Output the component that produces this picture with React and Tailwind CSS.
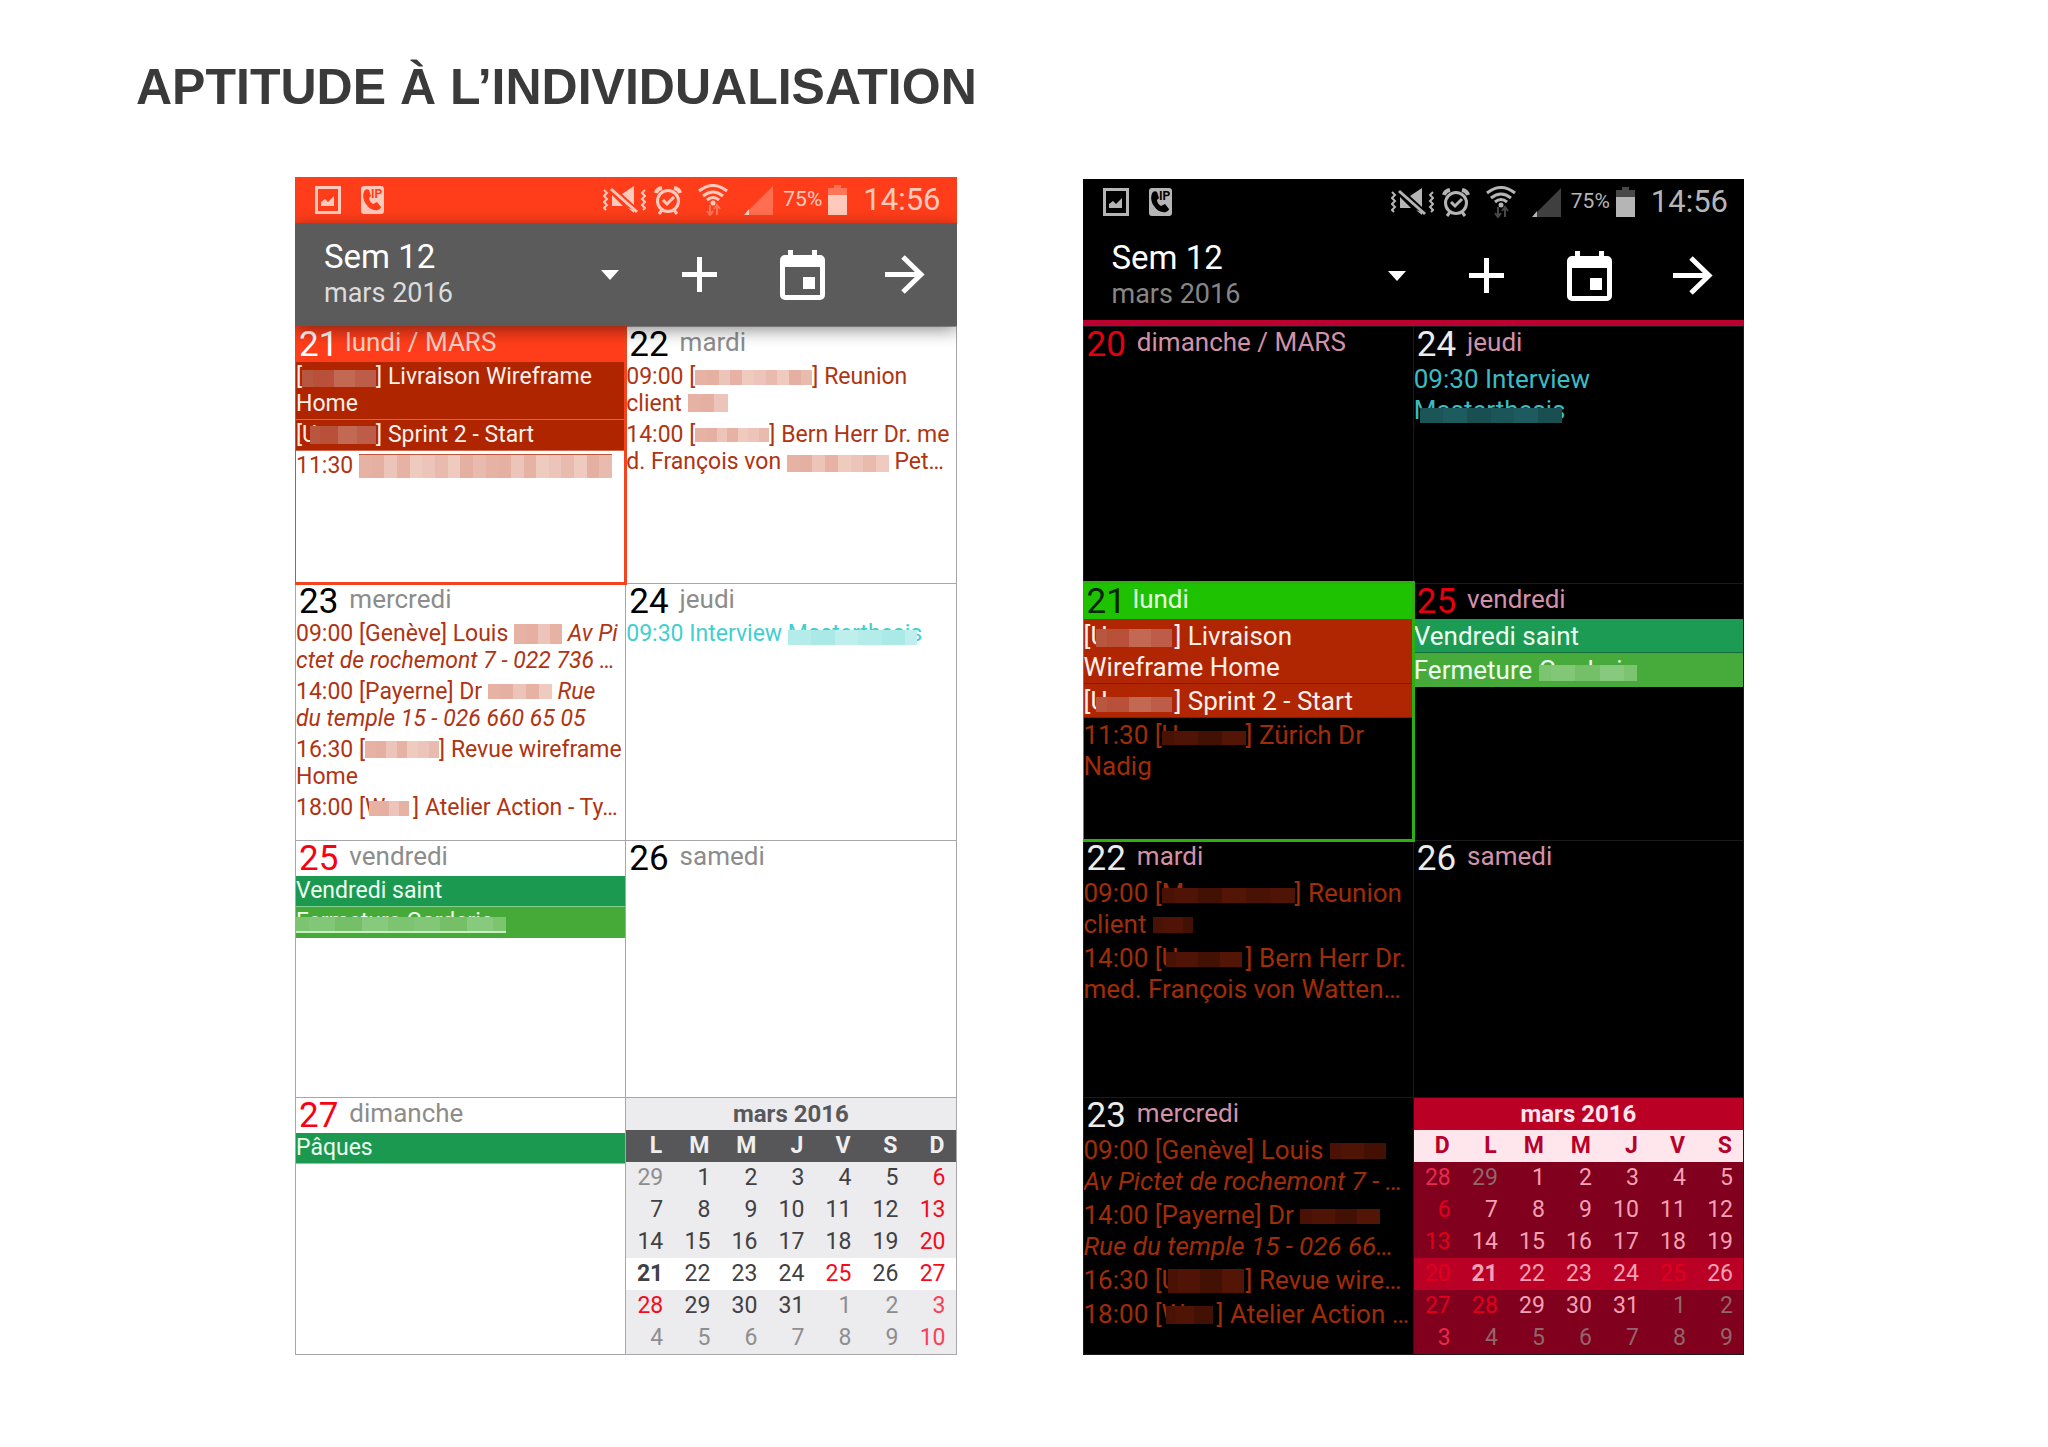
import React from 'react';
import clsx from 'clsx';

/* ---------- Icons ---------- */

const PictureIcon = () => (
  <svg width="26" height="28" viewBox="0 0 26 28" aria-hidden="true">
    <path fill="currentColor" fillRule="evenodd" d="M0 0h26v28H0zM3 3v22h20V3z" />
    <path fill="currentColor" d="M6 20v-4l4-3 3 3 6-6v10z" />
  </svg>
);

const IpPhoneIcon = ({ cutout }) => (
  <svg width="23" height="28" viewBox="0 0 23 28" aria-hidden="true">
    <rect width="23" height="28" rx="3" fill="currentColor" />
    <path
      className={cutout}
      d="M4 4c-3 4-2 10 1 14 3 5 8 7 12 6 2-1 3-2 3-3l-4-5-4 2c-2-1-4-4-4-6l2-2-2-6c-1-1-3-1-4 0z"
    />
    <text x="10" y="12" className={clsx(cutout, "font-['Roboto'] text-[12px] font-bold")}>IP</text>
  </svg>
);

const MuteIcon = () => (
  <svg width="43" height="28" viewBox="0 0 43 28" fill="none" stroke="currentColor" aria-hidden="true">
    <path strokeWidth="2" d="M1 4l3 3-3 3 3 3-3 3 3 3-3 3 2 2M42 4l-3 3 3 3-3 3 3 3-3 3 3 3-2 2" />
    <path fill="currentColor" stroke="none" d="M9 9l11 11H9zM19 8l12-8v19zM25 22l6 5v-3z" />
    <path strokeWidth="3" d="M8 3l26 23" />
  </svg>
);

const AlarmIcon = () => (
  <svg width="28" height="29" viewBox="0 0 28 29" fill="none" stroke="currentColor" aria-hidden="true">
    <circle cx="14" cy="15" r="10.5" strokeWidth="3" />
    <path d="M9 14l4 4 7-7" strokeWidth="3" />
    <path d="M2 7q1-4 6-5M26 7q-1-4-6-5" strokeWidth="4" />
    <path d="M8 24l-3 4M20 24l3 4" strokeWidth="3" />
  </svg>
);

const WifiIcon = () => (
  <svg width="30" height="32" viewBox="0 0 30 32" fill="none" stroke="currentColor" strokeWidth="3" aria-hidden="true">
    <path d="M1 7Q15-4 29 7M5 12Q15 4 25 12M9 16q6-5 12 0" />
    <circle cx="15" cy="19" r="2.5" fill="currentColor" stroke="none" />
    <path strokeWidth="2" className="opacity-40" d="M12 21v9M9 27l3 4 3-4M19 31v-9M16 25l3-4 3 4" />
  </svg>
);

const SignalIcon = () => (
  <svg width="29" height="29" viewBox="0 0 29 29" fill="currentColor" aria-hidden="true">
    <path className="opacity-35" d="M5 29V24L29 0v29z" />
    <path d="M0 29l5-6v6z" />
  </svg>
);

const BatteryIcon = () => (
  <svg width="19" height="30" viewBox="0 0 19 30" fill="currentColor" aria-hidden="true">
    <path className="opacity-40" d="M6 0h7v3h6v7H0V3h6z" />
    <path d="M0 10h19v20H0z" />
  </svg>
);

const PlusIcon = () => (
  <svg width="35" height="35" viewBox="0 0 35 35" stroke="currentColor" strokeWidth="5" aria-hidden="true">
    <path d="M17.5 0v35M0 17.5h35" />
  </svg>
);

const TodayIcon = () => (
  <svg width="45" height="50" viewBox="0 0 45 50" fill="currentColor" aria-hidden="true">
    <path
      fillRule="evenodd"
      d="M5 5h3V0h5v5h19V0h5v5h3a5 5 0 0 1 5 5v35a5 5 0 0 1-5 5H5a5 5 0 0 1-5-5V10a5 5 0 0 1 5-5zM5 17v28h35V17z"
    />
    <path d="M23 27h12v12H23z" />
  </svg>
);

const ArrowIcon = () => (
  <svg width="40" height="39" viewBox="0 0 40 39" fill="none" stroke="currentColor" strokeWidth="5" aria-hidden="true">
    <path d="M0 19.5h36M18 2l18 17.5L18 37" />
  </svg>
);

const CaretIcon = () => (
  <svg width="18" height="10" viewBox="0 0 18 10" fill="currentColor" aria-hidden="true">
    <path d="M0 0h18L9 10z" />
  </svg>
);

/* ---------- Pixelated names ---------- */

const TILES = {
  paper: ['bg-[#e6b2a4]', 'bg-[#e9bbae]', 'bg-[#ecc4b9]', 'bg-[#e5b0a2]', 'bg-[#eecabf]'],
  brick: ['bg-[#b9563f]', 'bg-[#bd5d49]', 'bg-[#c26853]', 'bg-[#b8503a]'],
  aqua: ['bg-[#b4ecea]', 'bg-[#abe9e7]', 'bg-[#bfefed]'],
  leaf: ['bg-[#7cc470]', 'bg-[#88ca7d]', 'bg-[#74bf67]', 'bg-[#82c777]'],
  ember: ['bg-[#4a1204]', 'bg-[#531505]', 'bg-[#431004]', 'bg-[#4f1405]'],
  lagoon: ['bg-[#1c5557]', 'bg-[#1e5b5e]', 'bg-[#1a4f51]'],
};

const Masked = ({ tone, width, cover = 'inset-x-0 top-[7px] h-[17px]', count = 7, children }) => (
  <span className={clsx('relative inline-block whitespace-nowrap', width)}>
    {children || '\u00a0'}
    <span className={clsx('absolute flex', cover)}>
      {Array.from({ length: count }, (_, i) => (
        <span key={i} className={clsx('flex-1', TILES[tone][(i * 3 + (i >> 1)) % TILES[tone].length])} />
      ))}
    </span>
  </span>
);

/* ---------- Themes ---------- */

const lightTheme = {
  frame: 'bg-white',
  line: 'border-[#a9a6a9]',
  status: 'bg-[#ff3d1a] text-[#ffcabb]',
  cutout: 'fill-[#ff3d1a]',
  toolbar: 'h-[103px] bg-[#5b5b5b] shadow-[0_4px_16px_rgba(0,0,0,0.45)]',
  subtitle: 'text-[#dcdcdc]',
  number: 'text-black',
  holiday: 'text-[#f90012]',
  label: 'text-[#8c8c8c]',
  today: 'outline-[#f4441f]',
  todayHead: 'bg-[#ff3d1a]',
  todayNumber: 'text-white',
  todayLabel: 'text-[#ffd0c4]',
  events: 'text-[23px] leading-[27px]',
  event: 'pt-px pb-0.5',
  plain: 'border-transparent text-[#b03411]',
  cyan: 'border-transparent text-[#3fcfcf]',
  brick: 'border-[#d2694e] bg-[#ae2500] text-[#fff1ea]',
  green: 'border-[#7fd08f] bg-[#1c9950] text-[#eefff0]',
  lime: 'border-transparent bg-[#46aa38] text-[#eefff0]',
  mini: 'bg-[#ecebed]',
  miniTitle: 'text-[#58575a]',
  miniHead: 'bg-[#575658] text-[#efefef]',
  miniWeek: 'bg-white',
  day: 'text-[#414043]',
  muted: 'text-[#8e8d90]',
  red: 'text-[#f40b1d]',
  redMuted: 'text-[#f8405a]',
};

const darkTheme = {
  frame: 'bg-black',
  line: 'border-[#1a1a1c]',
  status: 'bg-black text-[#b5b5b5]',
  cutout: 'fill-black',
  toolbar: 'h-[101px] bg-black shadow-[inset_0_-6px_0_#bb0030]',
  subtitle: 'text-[#868686]',
  number: 'text-[#ececec]',
  holiday: 'text-[#e6000f]',
  label: 'text-[#d391a8]',
  today: 'outline-[#2cb010]',
  todayHead: 'bg-[#1fc200]',
  todayNumber: 'text-[#06240a]',
  todayLabel: 'text-[#e6ffe0]',
  events: 'text-[26px] leading-[31px]',
  event: 'pt-0.5',
  plain: 'border-transparent text-[#a02c08]',
  cyan: 'border-transparent text-[#3bbcc4]',
  brick: 'border-[#7c1c02] bg-[#b02603] text-[#fff1ea]',
  green: 'border-[#156c38] bg-[#1c9b54] text-[#eefff0]',
  lime: 'border-transparent bg-[#46ab3a] text-[#eefff0]',
  mini: 'bg-[#80001e]',
  miniTitle: 'bg-[#bb0026] text-[#ffe6ec]',
  miniHead: 'bg-[#ffe6ec] text-[#b8002a]',
  miniWeek: 'bg-[#bb0026]',
  day: 'text-[#f3a0b4]',
  muted: 'text-[#93656a]',
  red: 'text-[#e0001c]',
  redMuted: 'text-[#e82a4c]',
};

/* ---------- Data ---------- */

const lightDays = [
  {
    number: 21,
    label: 'lundi / MARS',
    today: true,
    events: [
      { kind: 'brick', text: <>[<Masked tone="brick" width="w-[74px]" />] Livraison Wireframe<br />Home</> },
      { kind: 'brick', text: <>[<Masked tone="brick" width="w-[74px]" cover="left-2 right-0 top-[5px] h-[18px]">U</Masked>] Sprint 2 - Start</> },
      { kind: 'plain', text: <>11:30 <Masked tone="paper" width="w-[253px]" count={20} cover="inset-x-0 top-0.5 h-6 border-t border-[#c0563c]" /></> },
    ],
  },
  {
    number: 22,
    label: 'mardi',
    events: [
      { kind: 'plain', text: <>09:00 [<Masked tone="paper" width="w-[117px]" count={10} cover="inset-x-0 top-[7px] h-[15px]" />] Reunion<br />client <Masked tone="paper" width="w-[40px]" count={3} cover="inset-x-0 top-1 h-[18px]" /></> },
      { kind: 'plain', text: <>14:00 [<Masked tone="paper" width="w-[74px]" cover="inset-x-0 top-[7px] h-[14px]" />] Bern Herr Dr. me<br />d. François von <Masked tone="paper" width="w-[102px]" count={8} /> Pet…</> },
    ],
  },
  {
    number: 23,
    label: 'mercredi',
    events: [
      { kind: 'plain', text: <>09:00 [Genève] Louis <Masked tone="paper" width="w-[48px]" count={4} cover="inset-x-0 top-1 h-5" /> <i>Av Pi<br />ctet de rochemont 7 - 022 736 …</i></> },
      { kind: 'plain', text: <>14:00 [Payerne] Dr <Masked tone="paper" width="w-[64px]" count={5} cover="inset-x-0 top-[6px] h-[15px]" /> <i>Rue<br />du temple 15 - 026 660 65 05</i></> },
      { kind: 'plain', text: <>16:30 [<Masked tone="paper" width="w-[74px]" cover="inset-x-0 top-[5px] h-[17px]" />] Revue wireframe<br />Home</> },
      { kind: 'plain', text: <>18:00 [<Masked tone="paper" width="w-[48px]" count={4} cover="left-1 right-1 top-[7px] h-[15px]">W</Masked>] Atelier Action - Ty…</> },
    ],
  },
  {
    number: 24,
    label: 'jeudi',
    events: [
      { kind: 'cyan', text: <>09:30 Interview <Masked tone="aqua" width="w-[129px]" count={11} cover="inset-x-0 top-[10px] h-[15px]">Masterthesis</Masked></> },
    ],
  },
  {
    number: 25,
    label: 'vendredi',
    holiday: true,
    events: [
      { kind: 'green', text: 'Vendredi saint' },
      { kind: 'lime', text: <Masked tone="leaf" width="w-[210px]" count={16} cover="inset-x-0 top-[9px] h-[16px] border-b-2 border-[#c9efc0]">Fermeture Garderie</Masked> },
    ],
  },
  { number: 26, label: 'samedi', events: [] },
  { number: 27, label: 'dimanche', holiday: true, events: [{ kind: 'green', text: 'Pâques' }] },
];

// The dark view runs down the first column, then down the second
const darkDays = [
  { number: 20, label: 'dimanche / MARS', holiday: true, events: [] },
  {
    number: 24,
    label: 'jeudi',
    events: [
      { kind: 'cyan', text: <>09:30 Interview<br /><Masked tone="lagoon" width="w-[148px]" count={12} cover="left-1.5 right-0 top-[13px] h-[15px]">Masterthesis</Masked></> },
    ],
  },
  {
    number: 21,
    label: 'lundi',
    today: true,
    events: [
      { kind: 'brick', text: <>[<Masked tone="brick" width="w-[84px]" cover="left-1.5 right-0.5 top-[8px] h-[18px]">U</Masked>] Livraison<br />Wireframe Home</> },
      { kind: 'brick', text: <>[<Masked tone="brick" width="w-[84px]" cover="left-1.5 right-0.5 top-[11px] h-[15px]">U</Masked>] Sprint 2 - Start</> },
      { kind: 'plain', text: <>11:30 [<Masked tone="ember" width="w-[84px]" cover="inset-x-0 top-[11px] h-[14px]">U</Masked>] Zürich Dr<br />Nadig</> },
    ],
  },
  {
    number: 25,
    label: 'vendredi',
    holiday: true,
    events: [
      { kind: 'green', text: 'Vendredi saint' },
      { kind: 'lime', text: <>Fermeture <Masked tone="leaf" width="w-[98px]" count={8} cover="inset-x-0 top-[10px] h-[16px]">Garderie</Masked></> },
    ],
  },
  {
    number: 22,
    label: 'mardi',
    events: [
      { kind: 'plain', text: <>09:00 [<Masked tone="ember" width="w-[133px]" count={11} cover="inset-x-0 top-[10px] h-[15px]">M</Masked>] Reunion<br />client <Masked tone="ember" width="w-[40px]" count={4} cover="inset-x-0 top-[8px] h-[16px]" /></> },
      { kind: 'plain', text: <>14:00 [<Masked tone="ember" width="w-[84px]" cover="left-1 right-1 top-[9px] h-[15px]">U</Masked>] Bern Herr Dr.<br />med. François von Watten…</> },
    ],
  },
  { number: 26, label: 'samedi', events: [] },
  {
    number: 23,
    label: 'mercredi',
    events: [
      { kind: 'plain', text: <>09:00 [Genève] Louis <Masked tone="ember" width="w-[56px]" count={5} cover="inset-x-0 top-[8px] h-[16px]" /><br /><i>Av Pictet de rochemont 7 - …</i></> },
      { kind: 'plain', text: <>14:00 [Payerne] Dr <Masked tone="ember" width="w-[80px]" cover="inset-x-0 top-[9px] h-[15px]" /><br /><i>Rue du temple 15 - 026 66…</i></> },
      { kind: 'plain', text: <>16:30 [<Masked tone="ember" width="w-[84px]" cover="left-1.5 right-0.5 top-1 h-6">U</Masked>] Revue wire…</> },
      { kind: 'plain', text: <>18:00 [<Masked tone="ember" width="w-[55px]" count={5} cover="left-1 right-1 top-[7px] h-[18px]">W</Masked>] Atelier Action …</> },
    ],
  },
];

// n: normal, m: other month, r: red day, x: red day of another month, b: current day
const lightMonth = {
  head: ['L', 'M', 'M', 'J', 'V', 'S', 'D'],
  weeks: [
    ['29m', '1n', '2n', '3n', '4n', '5n', '6r'],
    ['7n', '8n', '9n', '10n', '11n', '12n', '13r'],
    ['14n', '15n', '16n', '17n', '18n', '19n', '20r'],
    ['21b', '22n', '23n', '24n', '25r', '26n', '27r'],
    ['28r', '29n', '30n', '31n', '1m', '2m', '3x'],
    ['4m', '5m', '6m', '7m', '8m', '9m', '10x'],
  ],
};

const darkMonth = {
  head: ['D', 'L', 'M', 'M', 'J', 'V', 'S'],
  weeks: [
    ['28x', '29m', '1n', '2n', '3n', '4n', '5n'],
    ['6r', '7n', '8n', '9n', '10n', '11n', '12n'],
    ['13r', '14n', '15n', '16n', '17n', '18n', '19n'],
    ['20r', '21b', '22n', '23n', '24n', '25r', '26n'],
    ['27r', '28r', '29n', '30n', '31n', '1m', '2m'],
    ['3x', '4m', '5m', '6m', '7m', '8m', '9m'],
  ],
};

/* ---------- Parts ---------- */

const StatusBar = ({ theme }) => (
  <div className={clsx('flex h-[46px] items-center justify-between pr-4 pl-5', theme.status)}>
    <div className="flex items-center gap-5">
      <PictureIcon />
      <IpPhoneIcon cutout={theme.cutout} />
    </div>
    <div className="flex items-center gap-4">
      <div className="flex items-center gap-2">
        <MuteIcon />
        <AlarmIcon />
      </div>
      <WifiIcon />
      <div className="flex items-center gap-2.5">
        <SignalIcon />
        <div className="flex items-center gap-1.5">
          <span className="text-[21px]">75%</span>
          <BatteryIcon />
        </div>
      </div>
      <span className="text-[31px]">14:56</span>
    </div>
  </div>
);

const Toolbar = ({ theme }) => (
  <div className={clsx('relative z-10 flex items-center text-white', theme.toolbar)}>
    <button type="button" className="flex flex-1 items-center justify-between pr-[29px] pl-[29px] text-left">
      <span className="leading-9">
        <span className="block text-[33px] leading-9">Sem 12</span>
        <span className={clsx('block text-[27px] leading-9', theme.subtitle)}>mars 2016</span>
      </span>
      <CaretIcon />
    </button>
    <button type="button" aria-label="Ajouter" className="flex w-[103px] justify-center"><PlusIcon /></button>
    <button type="button" aria-label="Aujourd’hui" className="flex w-[103px] justify-center"><TodayIcon /></button>
    <button type="button" aria-label="Semaine suivante" className="flex w-[103px] justify-center"><ArrowIcon /></button>
  </div>
);

const DayCell = ({ theme, day }) => {
  const numberColor = day.today ? theme.todayNumber : day.holiday ? theme.holiday : theme.number;

  return (
    <section
      className={clsx(
        'min-w-0 border-t border-l',
        theme.line,
        day.today && 'relative outline-3 -outline-offset-1',
        day.today && theme.today
      )}
    >
      <h2
        className={clsx(
          'flex h-[35px] items-start pl-[3px]',
          day.today ? 'gap-[7px]' : 'gap-[11px]',
          day.today && theme.todayHead
        )}
      >
        <span className={clsx('text-[35px] leading-[35px]', numberColor)}>{day.number}</span>
        <span className={clsx('text-[26px] leading-[31px]', day.today ? theme.todayLabel : theme.label)}>{day.label}</span>
      </h2>
      <ul className={theme.events}>
        {day.events.map((event, i) => (
          <li key={i} className={clsx('overflow-hidden border-b whitespace-nowrap', theme.event, theme[event.kind])}>
            {event.text}
          </li>
        ))}
      </ul>
    </section>
  );
};

const MiniMonth = ({ theme, month }) => {
  const styles = {
    n: theme.day,
    m: theme.muted,
    r: theme.red,
    x: theme.redMuted,
    b: clsx(theme.day, 'font-bold'),
  };

  return (
    <div className={clsx('border-t border-l', theme.line, theme.mini)}>
      <table className="w-full table-fixed border-collapse text-right text-[23px] leading-8">
        <caption className={clsx('text-center text-[24px] font-bold', theme.miniTitle)}>mars 2016</caption>
        <thead className={theme.miniHead}>
          <tr>
            {month.head.map((name, i) => (
              <th key={i} scope="col" className="p-0 pr-[11px] font-bold">{name}</th>
            ))}
          </tr>
        </thead>
        <tbody>
          {month.weeks.map((week, w) => (
            <tr key={w} className={clsx(w === 3 && theme.miniWeek)}>
              {week.map((cell) => (
                <td key={cell} className={clsx('p-0 pr-2.5', styles[cell.slice(-1)])}>{cell.slice(0, -1)}</td>
              ))}
            </tr>
          ))}
        </tbody>
      </table>
    </div>
  );
};

const Phone = ({ theme, days, month }) => (
  <article className={clsx('overflow-hidden', theme.frame)}>
    <StatusBar theme={theme} />
    <Toolbar theme={theme} />
    <div className={clsx('grid auto-rows-[257px] grid-cols-2 border-r border-b', theme.line)}>
      {days.map((day) => (
        <DayCell key={day.number} theme={theme} day={day} />
      ))}
      <MiniMonth theme={theme} month={month} />
    </div>
  </article>
);

const App = () => (
  <main className="min-h-screen bg-white pt-[57px] pb-[91px] font-['Roboto',sans-serif]">
    <h1 className="pl-[136px] font-['Liberation_Sans',sans-serif] text-[50px] leading-[60px] font-bold text-[#3a3a3a]">
      APTITUDE À L’INDIVIDUALISATION
    </h1>
    <div className="mt-[60px] grid grid-cols-2 items-end gap-[126px] pr-[304px] pl-[295px]">
      <Phone theme={lightTheme} days={lightDays} month={lightMonth} />
      <Phone theme={darkTheme} days={darkDays} month={darkMonth} />
    </div>
  </main>
);

export default App;
